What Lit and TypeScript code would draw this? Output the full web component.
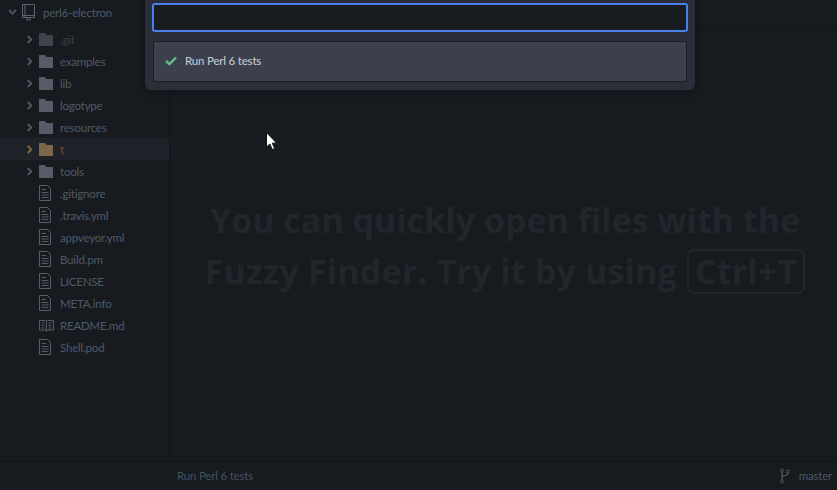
import { LitElement, html, css, svg } from "lit";
import { customElement } from "lit/decorators.js";

const dirs = [".git", "examples", "lib", "logotype", "resources", "t", "tools"];
const files = [".gitignore", ".travis.yml", "appveyor.yml", "Build.pm", "LICENSE", "META.info", "README.md", "Shell.pod"];

const chevron = svg`<path d="M1.2 1 L4.8 4.5 L1.2 8" fill="none" stroke="currentColor" stroke-width="2"/>`;
const folder = svg`<path d="M0 1.5 Q0 1 .5 1 H6 L7.5 3 H14 V14 H0 Z" fill="currentColor"/>`;
const fileIcon = svg`<path d="M.5 .5 H8.5 L11.5 3.5 V15.5 H.5 Z M2.5 4.5 H7 M2.5 7.5 H9.5 M2.5 10 H9.5 M2.5 12.5 H9.5" fill="none" stroke="currentColor"/>`;
const bookIcon = svg`<path d="M.5 2.5 H6 Q7 2.5 7.5 3.5 Q8 2.5 9 2.5 H14.5 V12 H9 L7.5 13 L6 12 H.5 Z M7.5 3.5 V12.5 M2.5 5 H5.5 M2.5 7.5 H5.5 M2.5 10 H5.5 M9.5 5 H12.5 M9.5 7.5 H12.5 M9.5 10 H12.5" fill="none" stroke="currentColor"/>`;

@customElement("app-root")
export class AppRoot extends LitElement {
  static styles = css`
    :host { display: block; width: 837px; height: 490px; overflow: hidden; position: relative;
      background: #171a1f; font-family: Lato, "Open Sans", sans-serif; font-size: 11.5px; letter-spacing: -0.2px; color: #4e5a69; }
    .workspace { display: flex; height: 461px; }
    .tree { width: 169px; flex: none; border-right: 1px solid #121418; background: #171a1f; padding-top: 1px; }
    .row { height: 22px; display: flex; align-items: center; white-space: nowrap; }
    .root { height: 22px; padding-left: 8px; margin-bottom: 5px; }
    .root .chev { color: #4c5561; display: block; margin-right: 5px; }
    .root .repo { color: #5b6370; display: block; margin-right: 8px; }
    .dir { padding-left: 27px; }
    .dir .chev { color: #4c5561; margin-right: 7px; display: block; }
    .dir .fold { color: #565c67; margin-right: 7px; display: block; }
    .dir.dim .fold { color: #3f444c; }
    .dir.dim span { color: #38414c; }
    .dir.sel { background: #1f2229; color: #7c4f3e; }
    .dir.sel .chev { color: #7d6446; }
    .dir.sel .fold { color: #7d664c; }
    .file { padding-left: 39px; }
    .file svg { color: #565d69; margin-right: 9px; display: block; }
    .file .book { margin-right: 6px; }
    .main { flex: 1; display: flex; flex-direction: column; min-width: 0; }
    .tabs { height: 28px; flex: none; border-bottom: 1px solid #121418; }
    .editor { flex: 1; display: flex; flex-direction: column; align-items: center; justify-content: center; padding: 1px 0 0 3px;
      font-family: "Open Sans", sans-serif; letter-spacing: 0; font-size: 34px; line-height: 51px; font-weight: 700; color: #22252b; }
    .line { display: flex; align-items: center; justify-content: center; gap: 10px; white-space: nowrap; height: 51px; }
    .second { letter-spacing: 0.17px; }
    .kbd { line-height: 41px; padding: 0 6px; border: 2px solid #22252b; border-radius: 7px; }
    .status { height: 28px; border-top: 1px solid #121418; display: flex; align-items: center; justify-content: space-between;
      padding: 0 5px 2px 177px; box-sizing: border-box; height: 29px; color: #465260; }
    .branch { display: flex; align-items: center; gap: 9px; color: #4b5767; }
    .branch svg { color: #515860; display: block; margin-top: 2px; }
    .modal { position: absolute; left: 145px; top: 0; width: 550px; height: 90px; background: #2a2e38; border-radius: 0 0 6px 6px;
      box-shadow: 0 0 6px 2px rgba(10,11,14,.35); padding: 3px 7px; box-sizing: border-box; }
    .input { height: 29px; box-sizing: border-box; background: #191c21; border: 2px solid #4b80ea; border-radius: 3px; }
    .item { margin: 9px 1px 0; height: 41px; box-sizing: border-box; background: #3c404c; border: 1px solid #1c1e25; display: flex; align-items: center;
      padding-left: 11px; gap: 8px; color: #c3c6cd; font-weight: 500; padding-bottom: 2px; }
    .item svg { color: #62bd83; display: block; margin-top: 1px; }
    .cursor { position: absolute; left: 266px; top: 132px; display: block; }
  `;

  render() {
    return html`
      <div class="workspace">
        <div class="tree">
          <div class="row root">
            <svg class="chev" width="9" height="6" viewBox="0 0 9 6"><path d="M1 1 L4.5 4.6 L8 1" fill="none" stroke="currentColor" stroke-width="2"/></svg>
            <svg class="repo" width="13" height="17" viewBox="0 0 13 17"><path d="M.5 .5 H12.5 V13.5 H.5 Z M3 .5 V13.5 M.5 11.5 H12.5 M5 13.5 V16.5 L6.5 15 L8 16.5 V13.5" fill="none" stroke="currentColor"/></svg>
            <span>perl6-electron</span>
          </div>
          ${dirs.map((d) => html`
            <div class="row dir ${d === ".git" ? "dim" : ""} ${d === "t" ? "sel" : ""}">
              <svg class="chev" width="5" height="9" viewBox="0.5 0 5 9">${chevron}</svg>
              <svg class="fold" width="14" height="15" viewBox="0 0 14 15">${folder}</svg>
              <span>${d}</span>
            </div>`)}
          ${files.map((f) => html`
            <div class="row file">
              ${f === "README.md"
                ? html`<svg class="book" width="15" height="15" viewBox="0 0 15 15">${bookIcon}</svg>`
                : html`<svg width="12" height="16" viewBox="0 0 12 16">${fileIcon}</svg>`}
              <span>${f}</span>
            </div>`)}
        </div>
        <div class="main">
          <div class="tabs"></div>
          <div class="editor">
            <div class="line"><span>You can quickly open files with the</span></div>
            <div class="line second"><span>Fuzzy Finder. Try it by using</span><span class="kbd">Ctrl+T</span></div>
          </div>
        </div>
      </div>
      <div class="status">
        <span>Run Perl 6 tests</span>
        <span class="branch">
          <svg width="10" height="16" viewBox="0 0 10 16"><path d="M2 4 V12 M8 5 C8 8 2 7 2 10" fill="none" stroke="currentColor" stroke-width="1.2"/><circle cx="2" cy="2.5" r="1.5" fill="none" stroke="currentColor"/><circle cx="2" cy="13.5" r="1.5" fill="none" stroke="currentColor"/><circle cx="8" cy="3.5" r="1.5" fill="none" stroke="currentColor"/></svg>
          <span>master</span>
        </span>
      </div>
      <div class="modal">
        <div class="input"></div>
        <div class="item">
          <svg width="12" height="10" viewBox="0 0 12 10"><path d="M1 5 L4.5 8.2 L11 1.5" fill="none" stroke="currentColor" stroke-width="2.4"/></svg>
          <span>Run Perl 6 tests</span>
        </div>
      </div>
      <svg class="cursor" width="11" height="18" viewBox="0 0 11 18"><path d="M.5 .5 V15 L3.8 12 L6.3 17.5 L8.7 16.5 L6.3 11.2 L10.5 11 Z" fill="#fff" stroke="#111"/></svg>
    `;
  }
}
